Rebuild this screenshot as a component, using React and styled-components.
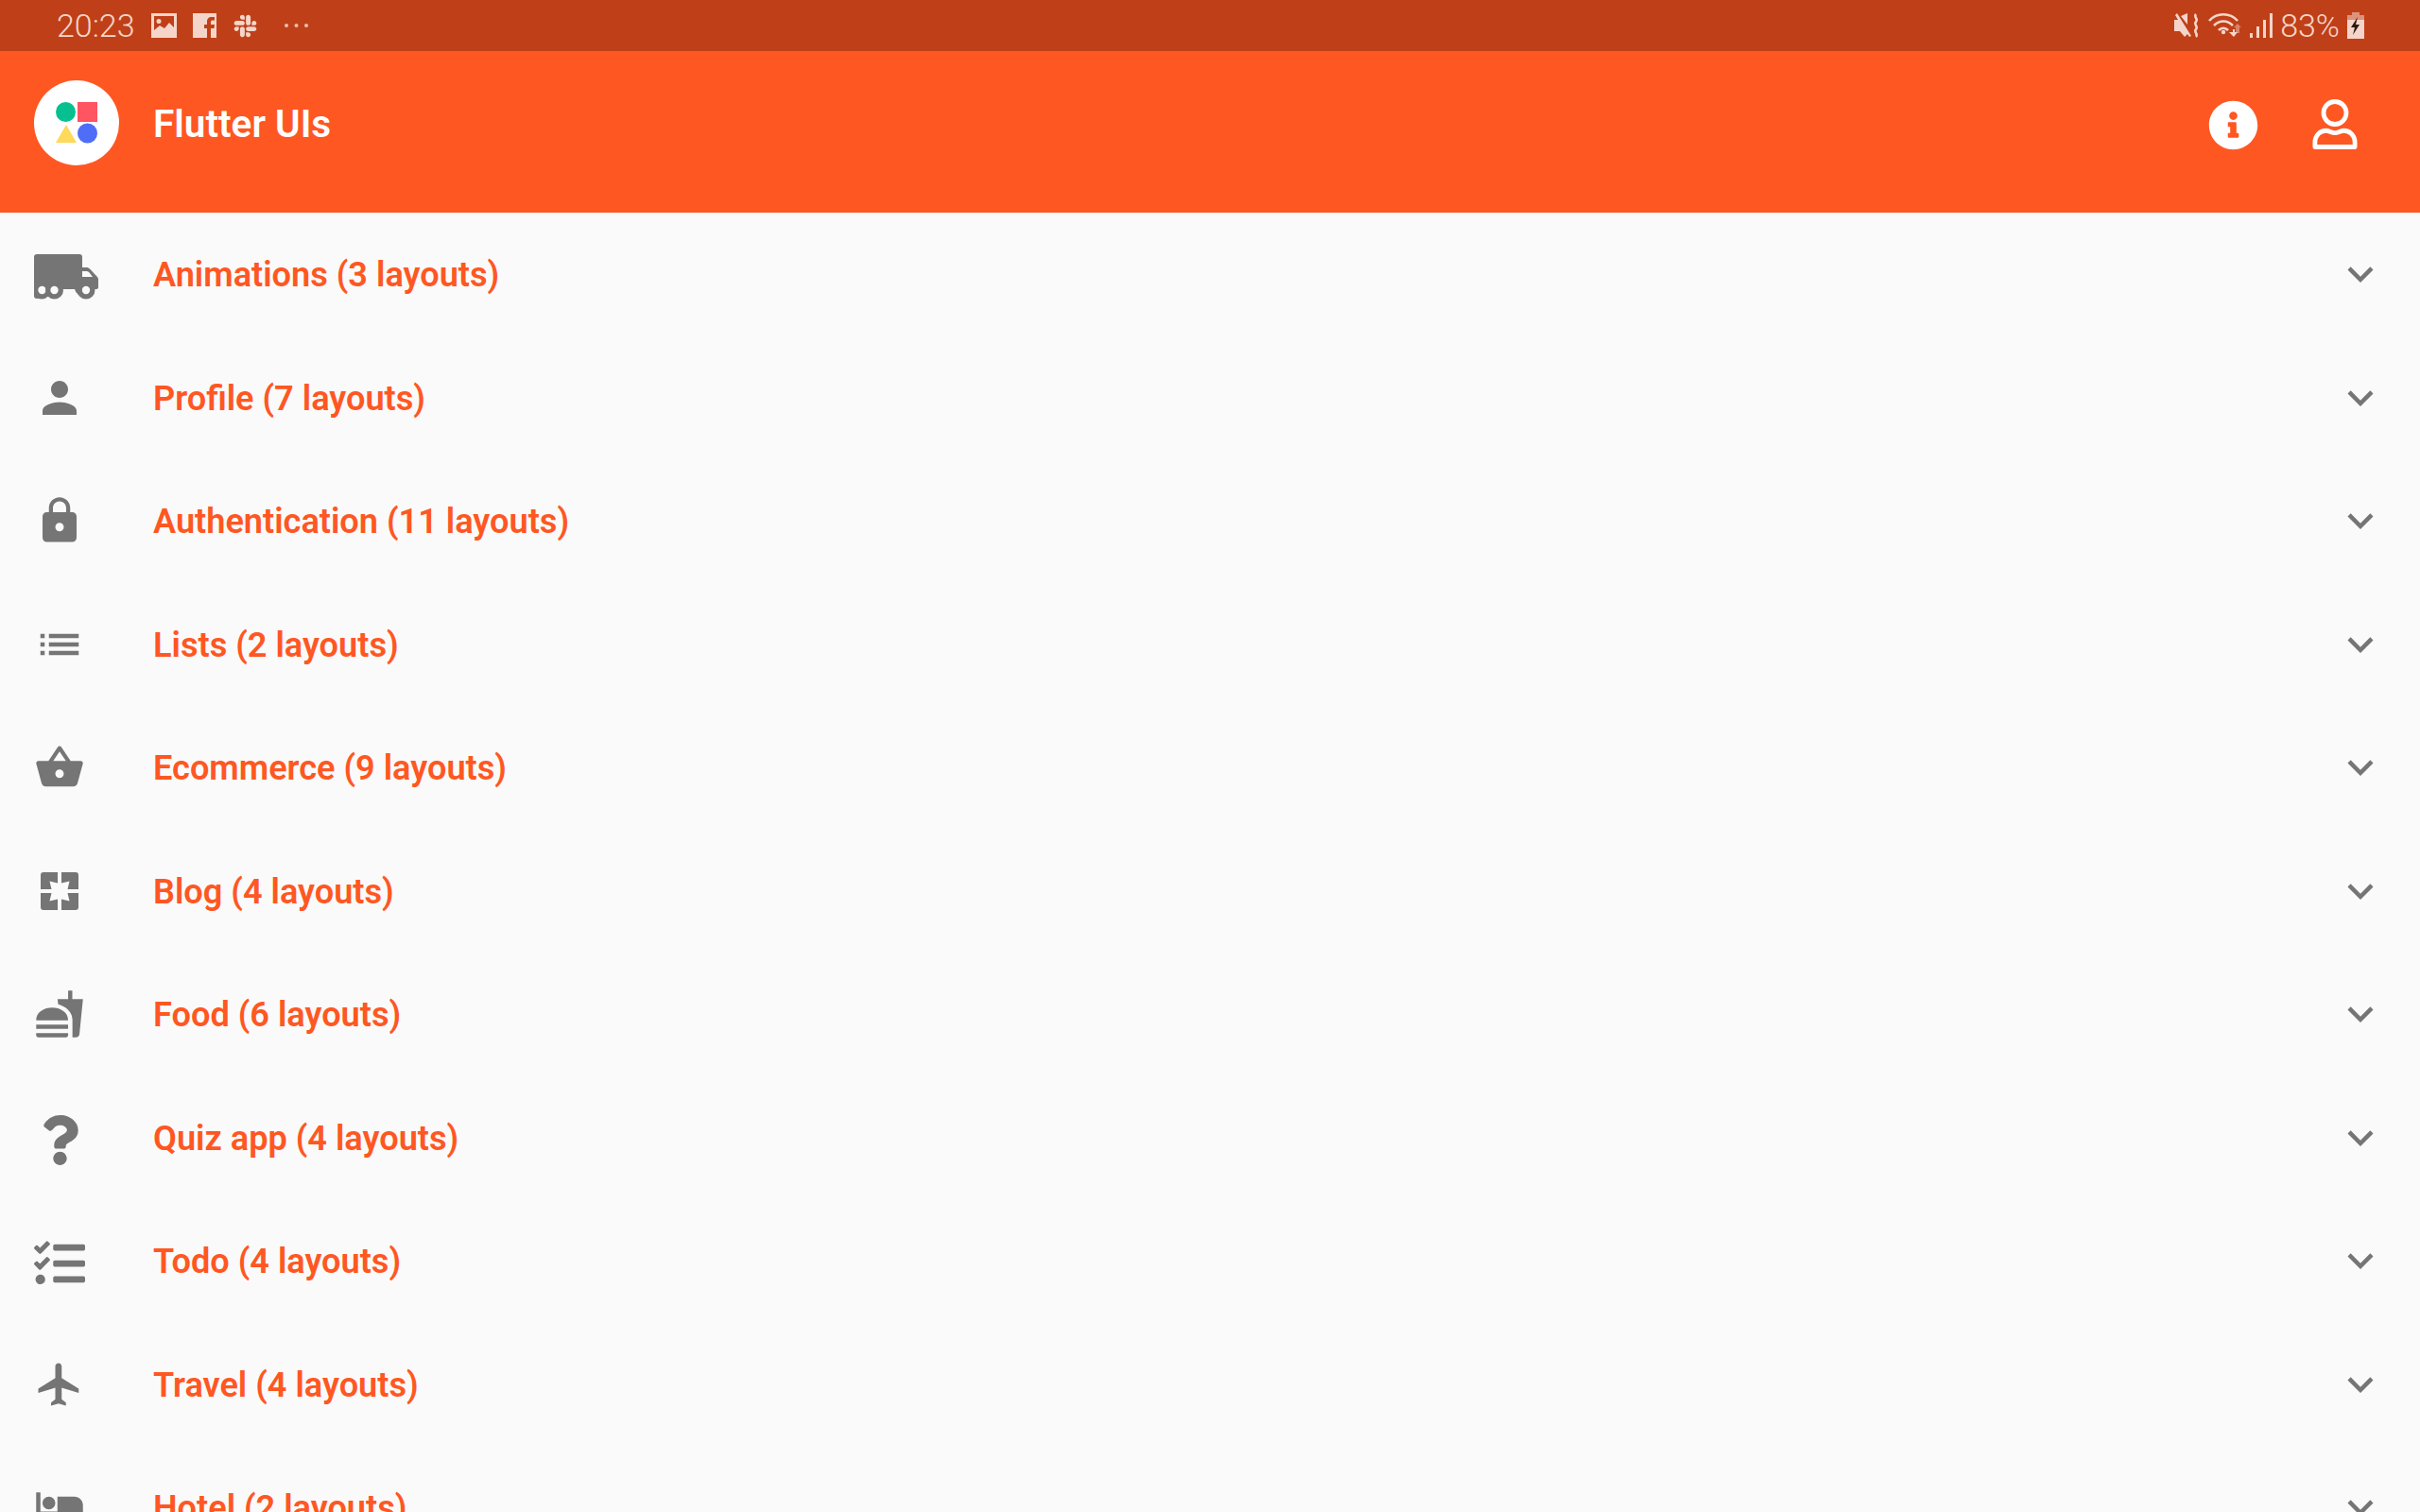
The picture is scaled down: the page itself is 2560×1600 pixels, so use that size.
import React from 'react';
import styled, { createGlobalStyle } from 'styled-components';
import {
  MdPerson,
  MdLock,
  MdList,
  MdShoppingBasket,
  MdFastfood,
  MdHotel,
  MdFlight,
  MdKeyboardArrowDown,
} from 'react-icons/md';
import { FaInfoCircle, FaTasks, FaSlack, FaQuestion } from 'react-icons/fa';

const Global = createGlobalStyle`
  html, body {
    margin: 0;
    height: 100%;
    overflow: hidden;
    background: #fafafa;
  }
  body {
    font-family: Roboto, "Liberation Sans", sans-serif;
  }
`;

const Page = styled.div`
  width: 2560px;
  height: 1600px;
  overflow: hidden;
  background: #fafafa;
`;

const StatusBar = styled.div`
  display: flex;
  align-items: center;
  justify-content: space-between;
  height: 54px;
  padding: 0 59px 0 60px;
  background: #bf4018;
  color: #f5d5ca;
`;

const StatusGroup = styled.div`
  display: flex;
  align-items: center;
  gap: ${(p) => p.$gap || 10}px;
`;

const StatusText = styled.span`
  font-size: 34px;
  font-weight: 300;
  line-height: 54px;
`;

const Dots = styled.svg`
  margin-left: 10px;
  opacity: 0.85;
`;

const AppBar = styled.header`
  display: flex;
  align-items: center;
  height: 171px;
  padding: 0 66px 0 36px;
  background: #ff5722;
  color: #fff;
`;

const Logo = styled.div`
  display: flex;
  align-items: center;
  justify-content: center;
  width: 90px;
  height: 90px;
  margin-top: -19px;
  border-radius: 50%;
  background: #fff;
`;

const Title = styled.h1`
  flex: 1;
  margin: -17px 0 0 36px;
  font-size: 40.500px;
  font-weight: 600;
`;

const Actions = styled.div`
  display: flex;
  align-items: center;
  gap: 57px;
  margin-top: -15px;
`;

const Row = styled.div`
  display: flex;
  align-items: center;
  height: 130.5px;
  padding: 0 36px;
`;

const IconSlot = styled.div`
  display: flex;
  align-items: center;
  justify-content: ${(p) => (p.$wide ? 'flex-start' : 'center')};
  width: 54px;
  margin-top: ${(p) => p.$nudge || 0}px;
  margin-right: 72px;
  color: #757575;
  svg {
    flex: none;
    display: block;
  }
`;

const Label = styled.span`
  flex: 1;
  padding-top: 1px;
  color: #ff5722;
  font-size: 36.150px;
  font-weight: 650;
`;

const Chevron = styled(MdKeyboardArrowDown)`
  flex: none;
  color: #757575;
`;

const ImageIcon = () => (
  <svg width="27" height="26" viewBox="0 0 27 26">
    <path
      fill="currentColor"
      fillRule="evenodd"
      d="M0 0h27v26H0zM3 3v15l6-5 5 3 5-6 5 5V3zM8 6a2.500 2.500 0 1 1 0 5 2.500 2.500 0 0 1 0-5z"
    />
  </svg>
);

const FacebookIcon = () => (
  <svg width="25" height="26" viewBox="0 0 25 26">
    <path
      fill="currentColor"
      d="M0 0h25v26h-6V16h3.500l.5-4h-4V9.500c0-1.200.4-2 2-2h2V4h-3c-3.500 0-5 2-5 5v3h-3v4h3v10H0z"
    />
  </svg>
);

const DotsIcon = () => (
  <Dots width="27" height="6" viewBox="0 0 27 6">
    <circle cx="3" cy="3" r="2" fill="currentColor" />
    <circle cx="13.500" cy="3" r="2" fill="currentColor" />
    <circle cx="24" cy="3" r="2" fill="currentColor" />
  </Dots>
);

const MuteIcon = () => (
  <svg width="28" height="28" viewBox="0 0 28 28">
    <path fill="currentColor" d="M0 8h4L1 3l2-2 15 24-2 1-2-3-3 3-5-6H0zM7 4l7-3v12z" />
    <path fill="none" stroke="currentColor" strokeWidth="2.500" d="M23 2c-3 3 3 5 0 8s3 5 0 8 3 5 0 8" />
  </svg>
);

const WifiIcon = () => (
  <svg width="36" height="28" viewBox="0 0 36 28">
    <g fill="none" stroke="currentColor" strokeWidth="2.600">
      <path d="M1 9c8-9 22-9 30 0" />
      <path d="M6 14c6-6 14-6 20 0" />
      <path d="M11 19c3-3 7-3 10 0" />
    </g>
    <circle cx="16" cy="21" r="2.200" fill="currentColor" />
    <path fill="currentColor" d="M22 21h4v-3h2v3h3l-4 5z" />
    <path fill="currentColor" opacity="0.45" d="M29 22v-6h-2l4-4 4 4h-2v6z" />
  </svg>
);

const SignalIcon = () => (
  <svg width="24" height="26" viewBox="0 0 24 26">
    <path fill="currentColor" d="M0 21h3v5H0zM7 14h3v12H7zM14 7h3v19h-3zM21 0h3v26h-3z" />
  </svg>
);

const BatteryIcon = () => (
  <svg width="18" height="28" viewBox="0 0 18 28">
    <path fill="currentColor" opacity="0.55" d="M5 0h8v3h5v5H0V3h5z" />
    <path fill="currentColor" d="M0 8h18v20H0z" />
    <path fill="#2a1a14" d="M11 5 4 16h4l-2 8 7-11H9z" />
  </svg>
);

const LogoMark = () => (
  <svg width="44" height="44" viewBox="0 0 44 44">
    <circle cx="10.500" cy="10.500" r="10.500" fill="#06c08f" />
    <rect x="23" y="0" width="21" height="21" fill="#ff5461" />
    <path d="M11 24 22 43H0z" fill="#ffd95a" />
    <circle cx="33.500" cy="33" r="10.500" fill="#4f6ef7" />
  </svg>
);

const OutlinePerson = () => (
  <svg width="48" height="56" viewBox="0 0 50 56" fill="none" stroke="#fff" strokeWidth="5">
    <circle cx="25" cy="15" r="12.500" />
    <path d="M3 52.500v-5c0-8 6-13 12-13 4 0 6 2.500 10 2.500s6-2.500 10-2.500c6 0 12 5 12 13v5z" strokeLinejoin="round" />
  </svg>
);

const TruckIcon = () => (
  <svg width="68" height="48" viewBox="0 0 68 48">
    <path
      fill="currentColor"
      d="M3 0h45a3 3 0 0 1 3 3v11h4c2 0 3 .6 4.500 2L65 22c2 1.700 3 3 3 5v8a2 2 0 0 1-2 2h-3.500a10 10 0 0 1-19.500 0H30a10 10 0 0 1-19 0H0V3a3 3 0 0 1 3-3z"
    />
    <path fill="currentColor" d="M0 35h12a10 10 0 0 1-9 12c-2 0-3-1-3-3z" />
    <circle cx="8" cy="38" r="9.500" fill="currentColor" />
    <circle cx="8.500" cy="38" r="4.200" fill="#fafafa" />
    <circle cx="21.500" cy="38" r="9.500" fill="currentColor" />
    <circle cx="21.500" cy="38" r="4.200" fill="#fafafa" />
    <circle cx="55" cy="38" r="9.500" fill="currentColor" />
    <circle cx="55" cy="38" r="4.200" fill="#fafafa" />
    <path fill="#fafafa" d="M51 18h4c1.500 0 2.500.5 3.500 1.500L62 24H51z" />
  </svg>
);

// one quadrant of the blog icon, turned four times
const quadrant = 'M3 0h15v11.500l-8.500-2 2 8.500H0V3a3 3 0 0 1 3-3z';

const BlogIcon = () => (
  <svg width="40" height="40" viewBox="0 0 40 40" fill="currentColor">
    {[0, 90, 180, 270].map((deg) => (
      <path key={deg} d={quadrant} transform={`rotate(${deg} 20 20)`} />
    ))}
  </svg>
);

const rows = [
  { label: 'Animations (3 layouts)', icon: <TruckIcon />, wide: true, nudge: 5 },
  { label: 'Profile (7 layouts)', icon: <MdPerson size={54} /> },
  { label: 'Authentication (11 layouts)', icon: <MdLock size={54} /> },
  { label: 'Lists (2 layouts)', icon: <MdList size={54} /> },
  { label: 'Ecommerce (9 layouts)', icon: <MdShoppingBasket size={54} /> },
  { label: 'Blog (4 layouts)', icon: <BlogIcon /> },
  { label: 'Food (6 layouts)', icon: <MdFastfood size={54} /> },
  { label: 'Quiz app (4 layouts)', icon: <FaQuestion size={53} />, nudge: 6 },
  { label: 'Todo (4 layouts)', icon: <FaTasks size={54} />, nudge: 6 },
  { label: 'Travel (4 layouts)', icon: <MdFlight size={54} /> },
  { label: 'Hotel (2 layouts)', icon: <MdHotel size={54} /> },
];

export default function App() {
  return (
    <Page>
      <Global />
      <StatusBar>
        <StatusGroup $gap={17}>
          <StatusText>20:23</StatusText>
          <ImageIcon />
          <FacebookIcon />
          <FaSlack size={27} />
          <DotsIcon />
        </StatusGroup>
        <StatusGroup $gap={8}>
          <MuteIcon />
          <WifiIcon />
          <SignalIcon />
          <StatusText>83%</StatusText>
          <BatteryIcon />
        </StatusGroup>
      </StatusBar>
      <AppBar>
        <Logo>
          <LogoMark />
        </Logo>
        <Title>Flutter UIs</Title>
        <Actions>
          <FaInfoCircle size={53} />
          <OutlinePerson />
        </Actions>
      </AppBar>
      {rows.map((row) => (
        <Row key={row.label}>
          <IconSlot $wide={row.wide} $nudge={row.nudge}>
            {row.icon}
          </IconSlot>
          <Label>{row.label}</Label>
          <Chevron size={54} />
        </Row>
      ))}
    </Page>
  );
}
